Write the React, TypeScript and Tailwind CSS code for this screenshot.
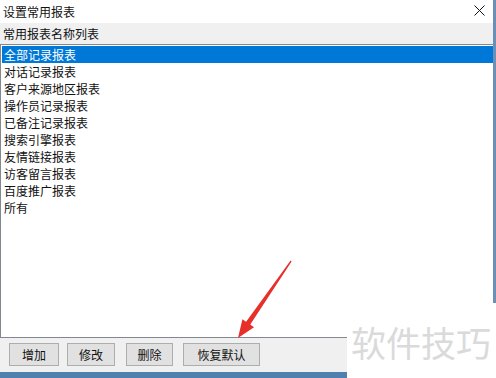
const reports = [
  "全部记录报表",
  "对话记录报表",
  "客户来源地区报表",
  "操作员记录报表",
  "已备注记录报表",
  "搜索引擎报表",
  "友情链接报表",
  "访客留言报表",
  "百度推广报表",
  "所有",
];

const buttons = [
  { label: "增加", className: "w-[50px]" },
  { label: "修改", className: "w-[48px] ml-[8px]" },
  { label: "删除", className: "w-[47px] ml-[11px]" },
  { label: "恢复默认", className: "w-[77px] ml-[10px]" },
];

export default function App() {
  return (
    <div
      className="relative w-[496px] h-[378px] overflow-hidden bg-white text-[12px] text-[#111]"
      style={{ fontFamily: '"Noto Sans CJK SC", "Noto Sans", sans-serif' }}
    >
      <div className="flex flex-col h-full border-r-[3px] border-[#6b8fb6]">
        {/* title bar */}
        <div className="h-[23px] flex items-center justify-between pl-[3px] pr-[8px] bg-white">
          <span className="leading-[14px]">设置常用报表</span>
          <svg width="11" height="11" viewBox="0 0 11 11" className="mt-[-2px]">
            <path d="M0.5 0.5 L10.5 10.5 M10.5 0.5 L0.5 10.5" stroke="#111" strokeWidth="1" />
          </svg>
        </div>

        {/* column header */}
        <div className="h-[21px] flex items-center px-[3px] bg-[#f0f0f0]">
          <span className="leading-[14px]">常用报表名称列表</span>
        </div>

        {/* list */}
        <div className="h-[294px] border border-r-0 border-[#828790] bg-white pt-[1px] pl-[1px]">
          {reports.map((r, i) => (
            <div
              key={r}
              className={
                i === 0
                  ? "h-[17px] flex items-center pl-[2px] bg-[#0078d7] text-white"
                  : "h-[17px] flex items-center pl-[2px]"
              }
            >
              <span className="leading-[14px]">{r}</span>
            </div>
          ))}
        </div>

        {/* buttons */}
        <div className="h-[34px] flex items-start pt-[5px] pl-[9px] bg-[#f0f0f0]">
          {buttons.map((b) => (
            <button
              key={b.label}
              className={`h-[23px] flex items-center justify-center bg-[#e1e1e1] border border-[#adadad] leading-[14px] ${b.className}`}
            >
              {b.label}
            </button>
          ))}
        </div>
      </div>

      {/* window bottom edge */}
      <div className="absolute left-0 right-0 bottom-0 h-[6px] bg-[#5080ae]" />

      {/* watermark */}
      <div className="absolute left-[347px] top-[303px] w-[149px] h-[75px] bg-white flex items-center pl-[4px] pt-[2px]">
        <span className="text-[35px] leading-none text-[#dadada]">软件技巧</span>
      </div>

      {/* red arrow */}
      <svg className="absolute left-0 top-0 pointer-events-none" width="496" height="378">
        <polygon
          points="291.6,261.4 250.3,324.6 254,327.2 238,338 242.4,319.2 246.1,321.8 290.6,260.6"
          fill="#e8302a"
        />
      </svg>
    </div>
  );
}
